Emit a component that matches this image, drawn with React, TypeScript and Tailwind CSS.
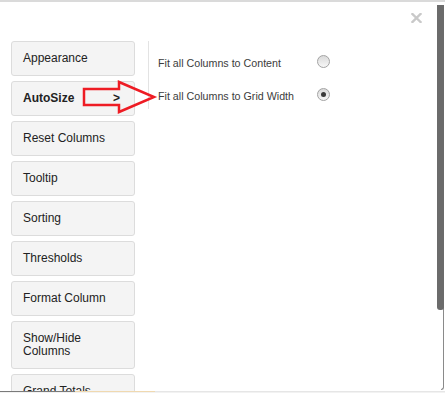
import React from "react";

const items = [
  "Appearance",
  "AutoSize",
  "Reset Columns",
  "Tooltip",
  "Sorting",
  "Thresholds",
  "Format Column",
  "Show/Hide Columns",
  "Grand Totals",
];

function Radio({ checked }: { checked?: boolean }) {
  return (
    <span className="flex h-[13px] w-[13px] items-center justify-center rounded-full border border-[#a3a3a3] bg-gradient-to-b from-[#dadada] to-[#f7f7f7]">
      {checked && <span className="h-[5px] w-[5px] rounded-full bg-[#3a3a3a]" />}
    </span>
  );
}

export default function App() {
  return (
    <div
      className="relative h-[393px] w-[445px] overflow-hidden bg-white text-[#333]"
      style={{ fontFamily: '"Liberation Sans", Arial, sans-serif' }}
    >
      <div className="h-[2px] w-full bg-[#dadada]" />

      {/* close */}
      <svg className="absolute left-[411px] top-[13px]" width="11" height="10" viewBox="0 0 11 10">
        <path d="M1.5 1 L9.5 9 M9.5 1 L1.5 9" stroke="#c9c9c9" strokeWidth="2.4" strokeLinecap="square" />
      </svg>

      <div className="flex pl-[11px] pt-[39px]">
        <div className="flex w-[124px] flex-col gap-[5px]">
          {items.map((t) => {
            const tall = t === "Show/Hide Columns";
            const active = t === "AutoSize";
            return (
              <div
                key={t}
                className={`flex shrink-0 items-center justify-between rounded-[3px] border border-[#dcdcdc] bg-[#f4f4f4] pl-[11px] pr-[14px] text-[12px] leading-[13px] text-[#222] ${
                  tall ? "h-[48px]" : "h-[35px]"
                } ${active ? "font-bold" : ""}`}
              >
                <span className={tall ? "w-[80px]" : ""}>{tall ? (<>Show/Hide<br />Columns</>) : t}</span>
                {active && <span className="font-bold">&gt;</span>}
              </div>
            );
          })}
        </div>

        <div className="ml-[13px] flex h-[68px] flex-col gap-[13px] self-start border-l border-[#e3e3e3] pl-[9px] pt-[10px]">
          <div className="flex h-[20px] items-center">
            <span className="mt-[4px] w-[159px] text-[10.7px] text-[#3c3c3c]">Fit all Columns to Content</span>
            <Radio />
          </div>
          <div className="flex h-[20px] items-center">
            <span className="mt-[4px] w-[159px] text-[10.7px] text-[#3c3c3c]">Fit all Columns to Grid Width</span>
            <Radio checked />
          </div>
        </div>
      </div>

      {/* red arrow annotation */}
      <svg className="absolute left-0 top-0" width="445" height="393" viewBox="0 0 445 393" fill="none">
        <polygon
          points="84,89 119,89 119,82 154,97 119,112 119,105 84,105"
          stroke="#ee1c24"
          strokeWidth="2.5"
          strokeLinejoin="miter"
          fill="none"
        />
      </svg>

      {/* scrollbar + right edge */}
      <div className="absolute bottom-[3px] right-[1px] top-[5px] w-[3px] rounded-br-[4px] border-b border-r border-[#8a8a8a]" />
      <div className="absolute right-[1px] top-[5px] h-[305px] w-[7px] rounded-b-[3px] bg-[#6b6b6b]" />

      {/* bottom edge */}
      <div className="absolute bottom-0 left-0 flex h-[2px] w-full items-start bg-[#f2f2f2]">
        <div className="h-[1px] w-[75px] bg-[#7a7a7a]" />
        <div className="h-[1px] w-[80px] bg-[#f0d9b0]" />
        <div className="h-[1px] flex-1 bg-[#e6e6e6]" />
      </div>
    </div>
  );
}
